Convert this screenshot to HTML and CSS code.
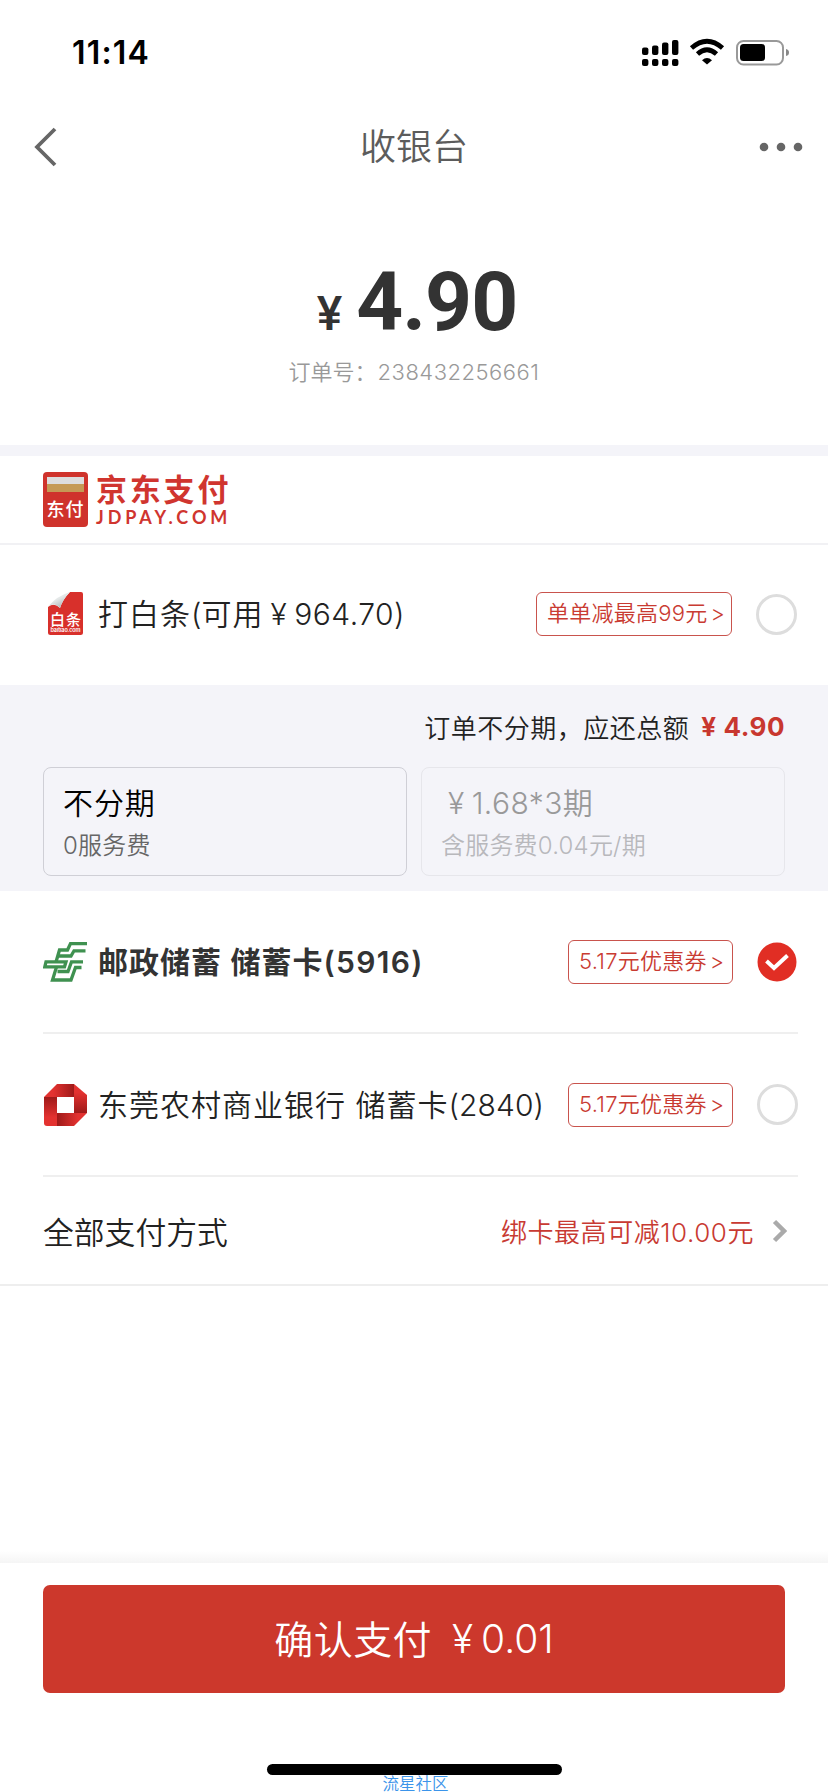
FILE: index.html
```
<!DOCTYPE html>
<html lang="zh-CN">
<head>
<meta charset="utf-8">
<title>收银台</title>
<link rel="stylesheet" href="styles.css">
</head>
<body>
<div class="page">
  <div class="status">
    <span class="time">11:14</span>
    <svg class="status-icons" width="150" height="32" viewBox="640 36 150 32">
      <g fill="#000">
        <rect x="642" y="47.500" width="6.400" height="7.500" rx="2"/><rect x="652" y="45.500" width="6.400" height="9.500" rx="2"/><rect x="662" y="42.500" width="6.400" height="12.500" rx="2"/><rect x="672" y="40" width="6.400" height="15" rx="2"/>
        <rect x="642" y="59" width="6.400" height="7" rx="2"/><rect x="652" y="59" width="6.400" height="7" rx="2"/><rect x="662" y="59" width="6.400" height="7" rx="2"/><rect x="672" y="59" width="6.400" height="7" rx="2"/>
        <path d="M702 60.300Q707 55.500 712 60.300L707 64.500Z"/>
      </g>
      <g fill="none" stroke="#000" stroke-width="4.800"><path d="M691.500 48Q707 34.500 722.500 48"/><path d="M697.500 54Q707 45.500 716.500 54"/></g>
      <rect x="737" y="41" width="46" height="23.500" rx="6.500" fill="none" stroke="#999" stroke-width="2"/>
      <rect x="740" y="44" width="25" height="17" rx="3.500"/>
      <path d="M786 49q3 .5 3 3.500t-3 3.500z" fill="#888"/>
    </svg>
  </div>
  <header class="nav">
    <svg width="24" height="40" viewBox="0 0 24 40"><path d="M21 2L3 20L21 38" fill="none" stroke="#666" stroke-width="3.800"/></svg>
    <h1 class="nav-title">收银台</h1>
    <svg width="44" height="10" viewBox="0 0 44 10"><g fill="#666"><circle cx="5" cy="5" r="4.300"/><circle cx="22" cy="5" r="4.300"/><circle cx="39" cy="5" r="4.300"/></g></svg>
  </header>
  <section class="amount">
    <div class="price"><span class="price-yen">¥</span><span class="price-num">4.90</span></div>
    <div class="order"><span>订单号：</span><span class="order-num">238432256661</span></div>
  </section>
  <div class="brand">
    <div class="brand-card"><span class="brand-stripe"></span><span class="brand-mini">东付</span></div>
    <div class="brand-words"><span class="brand-cn">京东支付</span><span class="brand-en">JDPAY.COM</span></div>
  </div>
  <div class="row row-first">
    <svg class="icon" width="44" height="44" viewBox="43 593 44 44">
      <defs><linearGradient id="curl" x2=".7" y2="1"><stop offset="0" stop-color="#f4f4f4"/><stop offset=".5" stop-color="#e4e8e8"/><stop offset="1" stop-color="#a9aeb0"/></linearGradient></defs>
      <path d="M70 593H81Q83 593 83 595V633.500Q83 636 80.500 636H50.500Q48 636 48 633.500V608Q54 603 60 609Q63 600 70 593Z" fill="#d8302b"/>
      <path d="M70 593Q57 597 48.500 607Q55 603 60 609Q63 600 70 593Z" fill="url(#curl)"/>
      <text class="bt-cn" x="50" y="625.500" textLength="31">白条</text>
      <text class="bt-en" x="50.500" y="632.500" textLength="30">baitiao.com</text>
    </svg>
    <span class="name">打白条<span class="num">(</span>可用<span class="num num-wide"><span class="yen">¥</span>964.70)</span></span>
    <span class="coupon coupon-wide">单单减最高99元<i>&gt;</i></span>
    <span class="radio"></span>
  </div>
  <section class="plans">
    <div class="plan-total">订单不分期，应还总额<b><span>¥</span>4.90</b></div>
    <div class="plan-list">
      <div class="plan"><span class="plan-main">不分期</span><span class="plan-sub">0服务费</span></div>
      <div class="plan plan-off"><span class="plan-main plan-num"><span class="yen">¥</span>1.68*3期</span><span class="plan-sub">含服务费0.04元/期</span></div>
    </div>
  </section>
  <div class="row row-post">
    <svg class="icon" width="44" height="44" viewBox="43 941 44 44">
      <g fill="none" stroke="#3f9150" stroke-width="3.300">
        <path d="M87 944.600H70.500L67.500 951H59.500L56 963"/>
        <path d="M85.500 951.800H74L71 957H57.500"/>
        <path d="M66 962.800H46L44.800 967.800H64.500Z"/>
        <path d="M83 962.800H71.500L68 972.500H57.500"/>
        <path d="M81.500 968.500H75.500L71 981H52.500L56.500 968"/>
      </g>
    </svg>
    <span class="name name-bold">邮政储蓄 储蓄卡<span class="num">(5916)</span></span>
    <span class="coupon">5.17元优惠券<i>&gt;</i></span>
    <svg class="check" width="40" height="40" viewBox="0 0 40 40"><circle cx="20" cy="20" r="19.500" fill="#e12e24"/><path d="M9.500 19L17 26L30.500 13.500" fill="none" stroke="#fff" stroke-width="4"/></svg>
  </div>
  <div class="row row-bank">
    <svg class="icon" width="44" height="44" viewBox="43 1085 44 44">
      <defs>
        <linearGradient id="a"><stop offset=".3" stop-color="#e33230"/><stop offset="1" stop-color="#9e1a19"/></linearGradient>
        <linearGradient id="b" x2="0" y2="1"><stop offset=".3" stop-color="#e33230"/><stop offset="1" stop-color="#9e1a19"/></linearGradient>
        <linearGradient id="c" x1="1" x2="0"><stop offset=".3" stop-color="#e33230"/><stop offset="1" stop-color="#9e1a19"/></linearGradient>
        <linearGradient id="d" y1="1" x2="0" y2="0"><stop offset=".3" stop-color="#e33230"/><stop offset="1" stop-color="#9e1a19"/></linearGradient>
      </defs>
      <path d="M44 1099L57 1086H74V1099Z" fill="url(#a)"/>
      <path d="M74 1086L87 1097V1115H74Z" fill="url(#b)"/>
      <path d="M87 1115L74 1128H57V1115Z" fill="url(#c)"/>
      <path d="M44 1099H57V1128H47Q44 1128 44 1125Z" fill="url(#d)"/>
    </svg>
    <span class="name">东莞农村商业银行 储蓄卡<span class="num">(2840)</span></span>
    <span class="coupon">5.17元优惠券<i>&gt;</i></span>
    <span class="radio"></span>
  </div>
  <div class="more">
    <span class="more-title">全部支付方式</span>
    <span class="more-tip">绑卡最高可减10.00元</span>
    <svg width="15" height="24" viewBox="0 0 15 24"><path d="M2.500 2.500L12 12L2.500 21.500" fill="none" stroke="#aaa" stroke-width="4.500"/></svg>
  </div>
  <footer class="footer">
    <div class="pay"><span class="pay-label">确认支付</span><span class="pay-sum"><span>¥</span>0.01</span></div>
    <div class="home"></div>
    <div class="mark">流星社区</div>
  </footer>
</div>
</body>
</html>
```
FILE: styles.css
```
* { box-sizing: border-box; }
body { margin: 0; background: #fff; font-family: Inter, "Noto Sans CJK SC", sans-serif; color: #333; }
svg { display: block; flex: none; }
.page { width: 828px; height: 1792px; overflow: hidden; display: flex; flex-direction: column; white-space: nowrap; font-weight: 350; font-feature-settings: "calt" 0; }
.status { height: 104px; padding: 0 38px 0 72px; display: flex; align-items: center; justify-content: space-between; }
.time { font-size: 32px; font-weight: 600; color: #000; letter-spacing: 1.2px; padding-top: 2px; }
.nav { height: 86px; padding: 0 25px 0 34px; display: flex; align-items: center; justify-content: space-between; }
.nav-title { margin: 0 0 0 11px; font-size: 36px; line-height: 50px; font-weight: 350; color: #5c5c5c; padding-top: 1px; }
.amount { height: 255px; padding-top: 64px; display: flex; flex-direction: column; align-items: center; }
.price { display: flex; align-items: baseline; line-height: 96px; color: #333; font-family: Roboto, sans-serif; font-weight: 700; padding-left: 6px; }
.price-yen { font-size: 48px; font-weight: 500; margin-right: 14px; }
.price-num { font-size: 82px; letter-spacing: -1px; }
.order { display: flex; align-items: center; font-size: 22px; line-height: 32px; color: #999; margin-top: -6px; }
.order-num { letter-spacing: .5px; margin-left: 1px; }
.brand { height: 100px; border-top: 11px solid #f4f4f9; border-bottom: 2px solid #f1f1f4; padding-left: 43px; display: flex; align-items: center; gap: 8px; }
.brand-card { width: 45px; height: 55px; border-radius: 4px; background: #cf332c; padding-top: 5px; display: flex; flex-direction: column; align-items: center; color: #fff; }
.brand-stripe { width: 37px; height: 15px; background: linear-gradient(#ddd 0 7px, #c59a55 7px); }
.brand-mini { font-size: 18px; line-height: 35px; font-weight: 500; letter-spacing: 1px; }
.brand-words { display: flex; flex-direction: column; color: #d0352f; padding-top: 2px; }
.brand-cn { font-size: 31px; line-height: 34px; font-weight: 700; letter-spacing: 2.800px; }
.brand-en { font: 700 18px/20px Lato, sans-serif; letter-spacing: 3.900px; }
.row { height: 143px; padding: 0 31px 0 43px; display: flex; align-items: center; border-bottom: 2px solid transparent; }
.row-first { height: 141px; }
.row-post, .row-bank { margin: 0 30px 0 43px; padding: 0; border-bottom-color: #efefef; }
.icon { margin-right: 11px; }
.name { font-size: 30px; line-height: 44px; color: #222; flex: 1; letter-spacing: 1px; }
.name-bold { font-weight: 600; color: #333; }
.num { letter-spacing: .1px; }
.num-wide { letter-spacing: .5px; }
.name-bold .num { letter-spacing: 1.3px; }
.yen { margin: 0 7px; }
.bt-cn { font-size: 15px; font-weight: 500; fill: #fff; }
.bt-en { font-size: 5.500px; font-weight: 600; fill: #fff; }
.coupon { width: 165px; height: 44px; border: 1.500px solid #c9534d; border-radius: 6px; color: #c93b32; font-size: 22px; line-height: 41px; letter-spacing: .25px; padding-left: 10px; margin-right: 24px; }
.coupon i { font-style: normal; margin-left: 3px; }
.coupon-wide { width: 196px; }
.radio { width: 41px; height: 41px; border: 3px solid #ddd; border-radius: 50%; }
.check { margin-right: 1px; }
.plans { height: 206px; background: #f4f4f9; padding: 20px 43px 0; }
.plan-total { display: flex; justify-content: flex-end; align-items: center; height: 42px; font-size: 26px; letter-spacing: .5px; color: #222; }
.plan-total b { font-size: 26px; color: #c8372f; font-weight: 650; margin-left: 12px; }
.plan-total b span { margin-right: 7px; }
.plan-list { display: flex; gap: 14px; margin-top: 20px; }
.plan { flex: 1; height: 109px; border: 1.500px solid #cfcfd6; border-radius: 8px; padding: 13px 19px; display: flex; flex-direction: column; color: #000; }
.plan-main { font-size: 30px; line-height: 44px; letter-spacing: .9px; }
.plan-num { letter-spacing: .4px; }
.plan-sub { font-size: 24px; line-height: 41px; color: #666; letter-spacing: .2px; }
.plan-off { border-color: #e6e6eb; }
.plan-off .plan-main { color: #999; }
.plan-off .plan-sub { color: #b8b8bc; }
.more { height: 109px; border-bottom: 2px solid #eee; padding: 0 41px 0 43px; display: flex; align-items: center; }
.more-title { flex: 1; font-size: 30.800px; color: #222; padding-bottom: 1px; }
.more-tip { font-size: 26px; color: #c83a32; letter-spacing: .55px; margin-right: 18px; }
.footer { margin-top: 265px; height: 241px; display: flex; flex-direction: column; align-items: center; }
.footer::before { content: ""; width: 100%; height: 12px; flex: none; background: linear-gradient(#fff, #f5f5f5); margin-bottom: 22px; }
.pay { width: 742px; height: 108px; flex: none; background: #cc382c; border-radius: 7px; color: #fff; display: flex; align-items: center; justify-content: center; font-size: 39px; }
.pay-label { letter-spacing: .4px; padding-bottom: 3px; }
.pay-sum { margin-left: 20px; }
.pay-sum span { margin-right: 8px; }
.home { width: 295px; height: 11px; flex: none; background: #000; border-radius: 6px; margin-top: 71px; }
.mark { font-size: 16.500px; line-height: 18px; color: #3b94ea; padding-left: 3px; }
```
